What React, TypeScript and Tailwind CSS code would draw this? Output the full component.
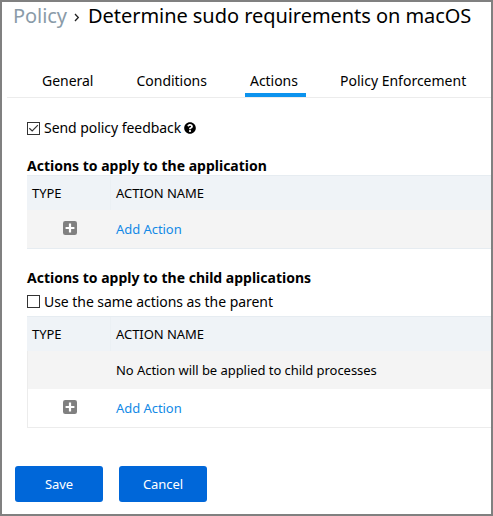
import React from "react";
import { FaQuestionCircle } from "react-icons/fa";

function PlusIcon() {
  return (
    <svg width="14" height="14" viewBox="0 0 14 14" className="mb-0.5 block">
      <rect width="14" height="14" rx="2.2" fill="#808080" />
      <path d="M7 2.6v8.8M2.6 7h8.8" stroke="#fff" strokeWidth="2.2" />
    </svg>
  );
}

function Checkbox({ checked = false }: { checked?: boolean }) {
  return (
    <span className="block size-[13px] shrink-0 border border-[#333] bg-white">
      {checked && (
        <svg width="11" height="11" viewBox="0 0 11 11" className="block">
          <path d="M1.3 5.2 4.2 8 9.9 2.2" fill="none" stroke="#333" strokeWidth="1.2" />
        </svg>
      )}
    </span>
  );
}

function HeaderRow() {
  return (
    <div className="flex h-[35px] items-center border-t border-[#e6ecf1] bg-[#eff3f7] text-[13px] tracking-[-0.05px]">
      <div className="flex h-full w-[84px] items-center border-r border-[#ebf0f4] pl-[5px] pt-0.5">TYPE</div>
      <div className="pl-[5px] pt-0.5">ACTION NAME</div>
    </div>
  );
}

function AddRow({ shaded = false }: { shaded?: boolean }) {
  return (
    <div className={`flex h-[38px] items-center text-[13px] tracking-[-0.05px] ${shaded ? "bg-[#f4f4f4]" : "bg-white"}`}>
      <div className="w-[89px] pl-9">
        <PlusIcon />
      </div>
      <a className="pt-0.5 text-[#1289e6]">Add Action</a>
    </div>
  );
}

function Tab({ label, className }: { label: string; className: string }) {
  return <div className={`h-[31px] whitespace-nowrap text-sm leading-[30px] ${className}`}>{label}</div>;
}

export default function App() {
  return (
    <div className="flex h-[516px] w-[493px] flex-col overflow-hidden border-2 border-[#808080] bg-white font-['Noto_Sans',sans-serif] text-black">
      <h1 className="flex h-7 items-center whitespace-nowrap pl-[11px] text-xl tracking-[-0.05px]">
        <span className="w-[54px] text-[#8a9ba8]">Policy</span>
        <svg width="6" height="9" viewBox="0 0 6 9" className="ml-[7px] mr-2 mt-0.5">
          <path d="M1 1 4.3 4.5 1 8" fill="none" stroke="#222" strokeWidth="1.3" />
        </svg>
        <span>Determine sudo requirements on macOS</span>
      </h1>
      <nav className="ml-[5px] mt-9 flex h-8 border-b border-[#ececec]">
        <Tab label="General" className="ml-[35px] w-[94.5px] tracking-[-0.02px]" />
        <Tab label="Conditions" className="w-[108.5px] tracking-[-0.03px]" />
        <Tab label="Actions" className="w-[61px] border-b-4 border-[#0c93ee] pl-[5px] tracking-[-0.05px]" />
        <Tab label="Policy Enforcement" className="ml-[34px]" />
      </nav>
      <main className="ml-[25px]">
        <div className="mt-5 flex h-5 items-center gap-1 text-sm tracking-[-0.05px]">
          <Checkbox checked />
          <span>Send policy feedback</span>
          <FaQuestionCircle size={12} className="-ml-px" />
        </div>
        <h2 className="mt-[18px] h-[19px] text-sm font-bold leading-[19px]">Actions to apply to the application</h2>
        <section className="border-b border-[#e6ecf1]">
          <HeaderRow />
          <AddRow shaded />
        </section>
        <h2 className="mt-[19px] h-5 text-sm font-bold leading-5">Actions to apply to the child applications</h2>
        <div className="mt-[3px] flex h-5 items-center gap-1 text-sm tracking-[-0.05px]">
          <Checkbox />
          <span className="pt-0.5">Use the same actions as the parent</span>
        </div>
        <section className="mt-[5px] border-b border-[#ececec]">
          <HeaderRow />
          <div className="flex h-[38px] items-center border-l border-[#ececec] bg-[#f4f4f4] pl-[88px] pt-0.5 text-[13px] tracking-[-0.05px]">
            No Action will be applied to child processes
          </div>
          <div className="border-l border-[#ececec] [&>div>div]:-ml-px">
            <AddRow />
          </div>
        </section>
      </main>
      <div className="ml-[13px] mt-[38px] flex gap-4">
        <button className="h-9 w-[88px] rounded-[3px] bg-[#0067d9] pt-0.5 text-[13px] tracking-[-0.05px] text-white">Save</button>
        <button className="h-9 w-[88px] rounded-[3px] bg-[#0067d9] pt-0.5 text-[13px] tracking-[-0.05px] text-white">Cancel</button>
      </div>
    </div>
  );
}
